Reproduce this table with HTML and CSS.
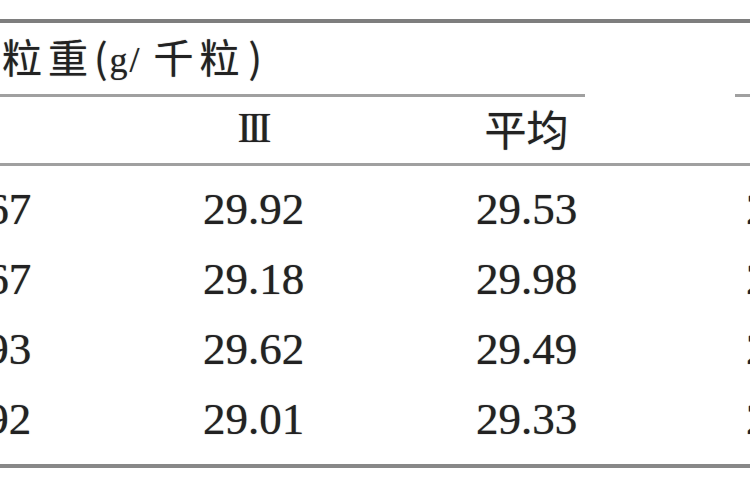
FILE: index.html
```html
<!DOCTYPE html>
<html lang="zh">
<head>
<meta charset="utf-8">
<title>粒重表</title>
<link rel="stylesheet" href="styles.css">
</head>
<body>
<div class="table">
  <div class="head1">
    <div class="group"><span class="cjk">粒重</span><span class="cjk lpar">(</span><span class="unit">g/</span><span class="cjk">千粒</span><span class="cjk rpar">)</span></div>
    <div class="group2"></div>
  </div>
  <div class="head2">
    <div class="roman">II</div>
    <div class="roman">III</div>
    <div class="cjk">平均</div>
    <div></div>
  </div>
  <div class="body">
    <div class="row"><span>29.67</span><span>29.92</span><span>29.53</span><span>29.23</span></div>
    <div class="row"><span>29.67</span><span>29.18</span><span>29.98</span><span>29.28</span></div>
    <div class="row"><span>29.93</span><span>29.62</span><span>29.49</span><span>29.49</span></div>
    <div class="row"><span>29.92</span><span>29.01</span><span>29.33</span><span>29.23</span></div>
  </div>
</div>
</body>
</html>
```
FILE: styles.css
```css
html, body {
  margin: 0;
  background: #ffffff;
  overflow: hidden;
}
body {
  font-family: "Liberation Serif", "Noto Sans CJK SC", serif;
  color: #222222;
}
.table {
  margin: 19px 0 0 -156px;
  width: 1092px;
  border-top: 4px solid #7e7e7e;
  border-bottom: 4px solid #888888;
}
.cjk {
  font-family: "Noto Sans CJK SC", sans-serif;
}
.head1 {
  display: grid;
  grid-template-columns: 819px 273px;
  height: 74px;
}
.group {
  box-sizing: border-box;
  height: 74px;
  margin-right: 78px;
  padding-left: 158px;
  padding-bottom: 6px;
  border-bottom: 3px solid #a0a0a0;
  display: flex;
  align-items: center;
  font-size: 40px;
  letter-spacing: 6px;
  text-shadow: 0 0 1px rgba(0, 0, 0, 0.5);
}
.lpar {
  letter-spacing: 2px;
}
.rpar {
  margin-left: 3px;
}
.unit {
  font-family: "Liberation Serif", serif;
  font-size: 36px;
  letter-spacing: 2px;
  margin: 0 12px 0 0;
  position: relative;
  top: 4px;
}
.group2 {
  box-sizing: border-box;
  height: 74px;
  margin-left: 72px;
  border-bottom: 3px solid #a0a0a0;
}
.head2 {
  box-sizing: border-box;
  height: 69px;
  padding-bottom: 6px;
  border-bottom: 3px solid #a0a0a0;
  display: grid;
  grid-template-columns: repeat(4, 273px);
  align-items: center;
  justify-items: center;
  font-size: 42px;
  text-shadow: 0 0 1px rgba(0, 0, 0, 0.5);
}
.roman {
  font-family: "Liberation Serif", serif;
  font-size: 42px;
  letter-spacing: -4px;
  padding-right: 2px;
}
.body {
  padding: 8px 0 10px;
}
.row {
  display: grid;
  grid-template-columns: repeat(4, 273px);
  height: 70px;
  align-items: center;
  justify-items: center;
  font-size: 45px;
  text-shadow: 0 0 1px rgba(0, 0, 0, 0.6);
}
.row span:last-child {
  margin-left: -6px;
}
```
